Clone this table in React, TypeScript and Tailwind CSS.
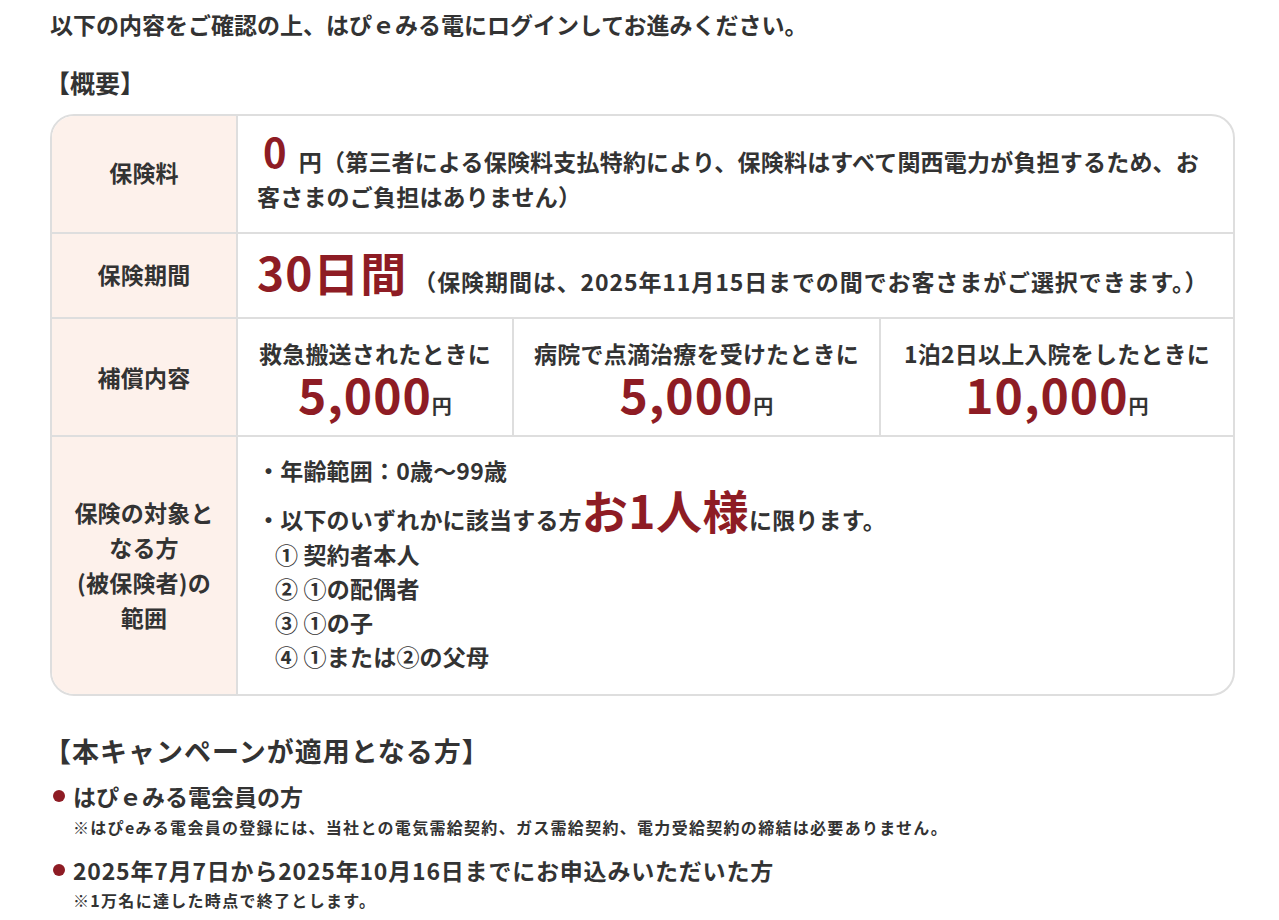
import React from "react";

const RED = "text-[#8e1c24]";

export default function App() {
  return (
    <div
      className="w-[1279px] min-h-[920px] bg-white text-[#333333] font-bold"
      style={{ fontFamily: '"Noto Sans CJK JP", "Noto Sans", sans-serif' }}
    >
      <div className="pl-[50px] pt-[8px] w-[1235px]">
        <p className="text-[23px] leading-[33px]">
          以下の内容をご確認の上、はぴｅみる電にログインしてお進みください。
        </p>
        <p className="mt-[25px] ml-[-5px] text-[25px] leading-[33px]">【概要】</p>

        {/* table */}
        <div className="mt-[15px] w-[1185px] rounded-[24px] border-2 border-[#dedede] overflow-hidden text-[23px] tracking-[0.2px]">
          {/* row 1 */}
          <div className="grid grid-cols-[186px_1fr] h-[118px] border-b-2 border-[#dedede]">
            <div className="bg-[#fdf1eb] border-r-2 border-[#dedede] flex items-center justify-center pb-[4px]">
              保険料
            </div>
            <div className="pl-[19px] pt-[28px] leading-[35px] whitespace-nowrap">
              <span className={`${RED} text-[40px] leading-[0px] ml-[6px] mr-[12px] relative top-[-3px]`}>0</span>
              円（第三者による保険料支払特約により、保険料はすべて関西電力が負担するため、お
              <br />
              客さまのご負担はありません）
            </div>
          </div>

          {/* row 2 */}
          <div className="grid grid-cols-[186px_1fr] h-[85px] border-b-2 border-[#dedede]">
            <div className="bg-[#fdf1eb] border-r-2 border-[#dedede] flex items-center justify-center pb-[2px]">
              保険期間
            </div>
            <div className="pl-[19px] flex items-center">
              <div className="flex items-baseline whitespace-nowrap mt-[-7px]">
                <span className={`${RED} text-[46px] leading-[50px] mr-[6px] tracking-[1px]`}>30日間</span>
                <span className="tracking-[0.9px]">
                  （保険期間は、2025年11月15日までの間でお客さまがご選択できます。）
                </span>
              </div>
            </div>
          </div>

          {/* row 3 */}
          <div className="grid grid-cols-[186px_1fr] h-[118px] border-b-2 border-[#dedede]">
            <div className="bg-[#fdf1eb] border-r-2 border-[#dedede] flex items-center justify-center">
              補償内容
            </div>
            <div className="grid grid-cols-[276px_367px_1fr]">
              {[
                ["救急搬送されたときに", "5,000"],
                ["病院で点滴治療を受けたときに", "5,000"],
                ["1泊2日以上入院をしたときに", "10,000"],
              ].map(([t, n], i) => (
                <div
                  key={i}
                  className={`flex flex-col items-center justify-center ${
                    i < 2 ? "border-r-2 border-[#dedede]" : ""
                  }`}
                >
                  <div className="leading-[32px] whitespace-nowrap">{t}</div>
                  <div className="flex items-baseline h-[48px] whitespace-nowrap">
                    <span className={`${RED} inline-block text-[48px] leading-[48px] tracking-[1px]`}>{n}</span>
                    <span className="inline-block text-[20px] leading-[24px]">円</span>
                  </div>
                </div>
              ))}
            </div>
          </div>

          {/* row 4 */}
          <div className="grid grid-cols-[186px_1fr] h-[257px]">
            <div className="bg-[#fdf1eb] border-r-2 border-[#dedede] flex items-center justify-center text-center leading-[35px] px-[20px] pb-[2px]">
              <div>
                保険の対象と
                <br />
                なる方
                <br />
                (被保険者)の
                <br />
                範囲
              </div>
            </div>
            <div className="pl-[19px] pt-[16px]">
              <div className="leading-[34px]">・年齢範囲：0歳～99歳</div>
              <div className="flex items-baseline h-[50px] whitespace-nowrap mt-[-1px]">
                <span className="inline-block leading-[48px]">・以下のいずれかに該当する方</span>
                <span className={`${RED} inline-block text-[46px] leading-[46px] tracking-[0.5px]`}>お1人様</span>
                <span className="inline-block">に限ります。</span>
              </div>
              <div className="pl-[18px] leading-[34px] mt-[1px]">
                <div>① 契約者本人</div>
                <div>② ①の配偶者</div>
                <div>③ ①の子</div>
                <div>④ ①または②の父母</div>
              </div>
            </div>
          </div>
        </div>

        {/* campaign */}
        <p className="mt-[37px] ml-[-6px] text-[27px] leading-[36px] tracking-[1px]">
          【本キャンペーンが適用となる方】
        </p>

        <div className="mt-[9px] flex items-center leading-[36px] text-[23px]">
          <span className="w-[12px] h-[12px] rounded-full bg-[#8e1c24] ml-[3px] mr-[8px]" />
          <span>はぴｅみる電会員の方</span>
        </div>
        <p className="pl-[23px] text-[16px] leading-[26px] tracking-[1.3px]">
          ※はぴeみる電会員の登録には、当社との電気需給契約、ガス需給契約、電力受給契約の締結は必要ありません。
        </p>

        <div className="mt-[12px] flex items-center leading-[36px] text-[23px]">
          <span className="w-[12px] h-[12px] rounded-full bg-[#8e1c24] ml-[3px] mr-[8px]" />
          <span className="tracking-[0.8px]">2025年7月7日から2025年10月16日までにお申込みいただいた方</span>
        </div>
        <p className="pl-[23px] text-[16px] leading-[24px] tracking-[1.3px]">※1万名に達した時点で終了とします。</p>
      </div>
    </div>
  );
}
